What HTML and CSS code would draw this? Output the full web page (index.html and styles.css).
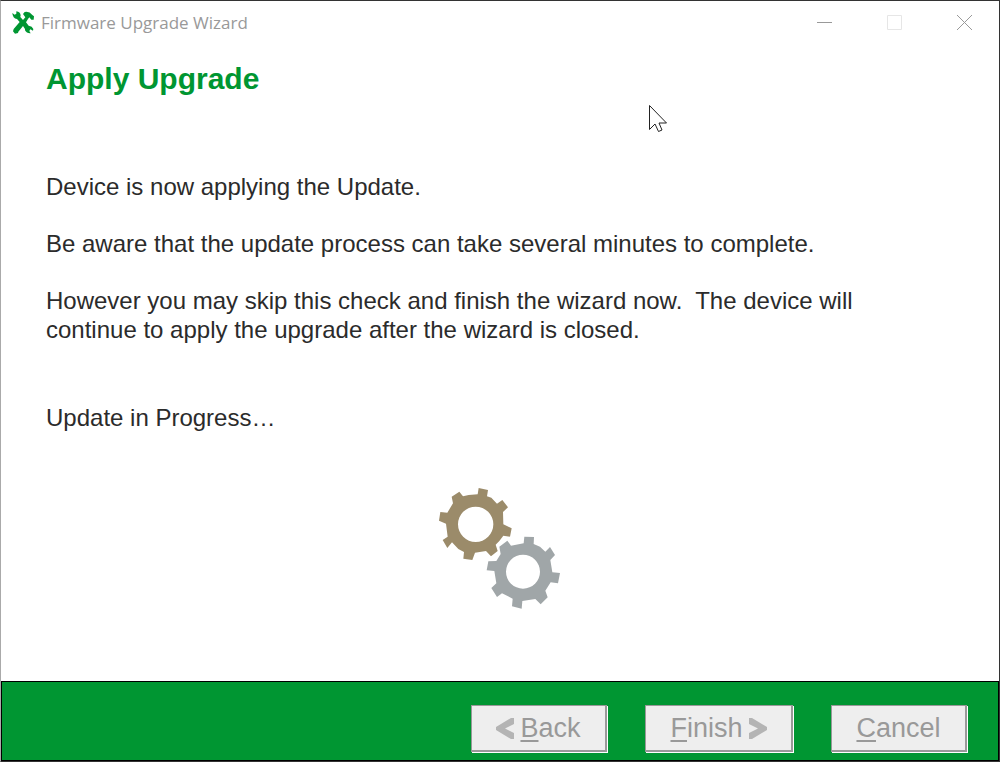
FILE: index.html
```html
<!DOCTYPE html>
<html lang="en">
<head>
    <meta charset="UTF-8">
    <meta name="viewport" content="width=device-width, initial-scale=1.0">
    <title>Firmware Upgrade Wizard</title>
    <link rel="stylesheet" href="styles.css">
</head>
<body>
    <div class="window">
        <header class="title-bar">
            <svg class="app-icon" viewBox="0 0 66 69" aria-hidden="true">
                <path d="M1 6 L8 11 L13 8 L13 1 Q25 3 26 13 L25 18 L33 27 L40 19 L33 9 L38 3 Q52 0 61 12 L66 16 L65 26 L58 26 L52 19 L48 24 L42 34 L50 44 L59 47 L64 54 L63 59 L55 55 L52 60 L56 67 Q44 68 39 58 L39 54 L33 45 L19 62 L18 66 L9 68 L3 61 L5 54 L23 33 L15 24 Q2 23 1 6 Z"/>
            </svg>
            <span class="title-text">Firmware Upgrade Wizard</span>
            <div class="window-controls">
                <button type="button" aria-label="Minimize">
                    <svg viewBox="0 0 15 15"><path d="M0 7.5H15"/></svg>
                </button>
                <button type="button" class="maximize" aria-label="Maximize" disabled>
                    <svg viewBox="0 0 15 15"><path d="M0.5 0.5H14.5V14.5H0.5Z"/></svg>
                </button>
                <button type="button" aria-label="Close">
                    <svg viewBox="0 0 15 15"><path d="M0 0L15 15M15 0L0 15"/></svg>
                </button>
            </div>
        </header>

        <main class="content">
            <h1>Apply Upgrade</h1>
            <p>Device is now applying the Update.</p>
            <p>Be aware that the update process can take several minutes to complete.</p>
            <p class="note">However you may skip this check and finish the wizard now.&nbsp; The device will continue to apply the upgrade after the wizard is closed.</p>
            <p class="status">Update in Progress…</p>
            <svg class="gears" viewBox="0 0 420 420" aria-hidden="true">
                <path class="gear-brown" fill-rule="evenodd" d="M146 24 L174 30 L171 49 L184 53 L201 71 L217 60 L234 82 L219 96 L220 133 L245 145 L240 170 L220 167 L208 183 L197 194 L203 213 L183 229 L168 213 L135 218 L127 240 L100 236 L102 216 L85 207 L66 187 L52 204 L38 180 L53 170 L48 131 L27 122 L31 96 L52 98 L69 70 L65 50 L88 35 L99 49 L116 45 L143 43 Z M137 80 A53 53 0 1 0 137 186 A53 53 0 1 0 137 80 Z"/>
                <path class="gear-gray" fill-rule="evenodd" d="M283 170 L312 171 L311 192 L330 200 L346 215 L360 201 L375 225 L361 240 L367 277 L390 279 L384 310 L362 307 L346 332 L353 352 L332 373 L316 357 L277 363 L275 386 L246 379 L248 356 L216 340 L201 351 L184 324 L199 310 L193 273 L170 271 L175 244 L199 243 L212 222 L208 200 L232 182 L243 197 L281 190 Z M279 224 A51 51 0 1 0 279 326 A51 51 0 1 0 279 224 Z"/>
            </svg>
        </main>

        <footer class="button-bar">
            <button type="button">
                <svg class="arrow" viewBox="0 0 18 21" aria-hidden="true"><path d="M18 0V6L9 10.5L18 15V21H15L0 12V9L15 0Z"/></svg>
                <span><u>B</u>ack</span>
            </button>
            <button type="button" class="finish">
                <span><u>F</u>inish</span>
                <svg class="arrow" viewBox="0 0 18 21" aria-hidden="true"><path d="M0 0V6L9 10.5L0 15V21H3L18 12V9L3 0Z"/></svg>
            </button>
            <button type="button"><span><u>C</u>ancel</span></button>
        </footer>
    </div>

    <svg class="cursor" viewBox="0 0 19 28" aria-hidden="true">
        <path d="M0.5 0.5V24.5L6 19L9.5 26.5L13 25L10 18H17.5Z"/>
    </svg>
</body>
</html>
```
FILE: styles.css
```css
* {
    box-sizing: border-box;
}
body {
    margin: 0;
    font-family: "Liberation Sans", Arial, sans-serif;
    color: #2b2b2b;
    background-color: #fff;
}
.window {
    display: flex;
    flex-direction: column;
    min-height: 100vh;
    border: 1px solid #333;
    border-left-color: #aaa;
}
.title-bar {
    display: flex;
    align-items: center;
    height: 43px;
    padding-left: 11px;
}
.app-icon {
    width: 22px;
    height: 23px;
    margin-right: 7px;
    fill: #009632;
}
.title-text {
    font-family: "Open Sans", "Noto Sans", sans-serif;
    font-size: 17px;
    color: #999;
}
.window-controls {
    display: flex;
    margin-left: auto;
}
.window-controls button {
    display: flex;
    align-items: center;
    justify-content: center;
    width: 70px;
    height: 43px;
    padding: 0;
    border: none;
    background: none;
}
.window-controls svg {
    width: 15px;
    height: 15px;
    fill: none;
    stroke: #999;
}
.window-controls .maximize svg {
    stroke: #e6e6e6;
}
.content {
    display: flex;
    flex: 1;
    flex-direction: column;
    padding: 17px 45px 0;
}
h1 {
    margin: 0 0 75px;
    font-size: 30px;
    line-height: 36px;
    color: #009632;
}
p {
    margin: 0 0 28px;
    font-size: 24px;
    line-height: 29px;
}
.note {
    max-width: 860px;
}
.status {
    margin: 31px 0 48px;
}
.gears {
    align-self: center;
    width: 140px;
    height: 140px;
}
.gear-brown {
    fill: #9b8b6a;
}
.gear-gray {
    fill: #a0a6a8;
}
.button-bar {
    display: flex;
    justify-content: flex-end;
    gap: 38px;
    height: 80px;
    padding: 23px 31px 0 0;
    border: 1px solid #000;
    background-color: #009632;
}
.button-bar button {
    display: flex;
    align-items: center;
    justify-content: center;
    gap: 6px;
    width: 136px;
    height: 47px;
    padding: 0;
    border: solid #999;
    border-width: 1px 2px 2px 1px;
    box-shadow: 1px 1px 0 #fff;
    background-color: #eee;
    font-family: inherit;
    font-size: 27px;
    color: #999;
}
.button-bar .finish {
    width: 148px;
}
.button-bar u {
    text-decoration-thickness: 2px;
    text-underline-offset: 3px;
}
.arrow {
    width: 18px;
    height: 21px;
    fill: #b4b4b4;
}
/* mouse pointer over the window */
.cursor {
    position: absolute;
    top: 105px;
    left: 649px;
    width: 19px;
    height: 28px;
    fill: #fff;
    stroke: #222;
    pointer-events: none;
}
```
